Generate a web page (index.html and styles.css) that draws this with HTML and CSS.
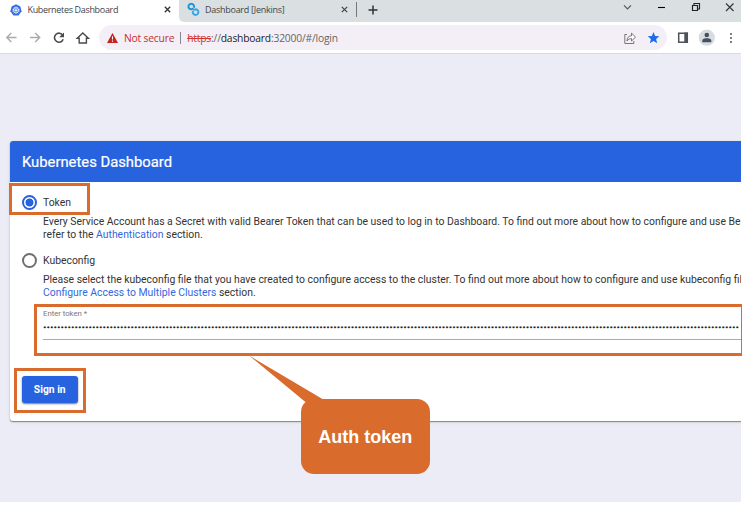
FILE: index.html
```html
<!DOCTYPE html>
<html lang="en">
<head>
<meta charset="utf-8">
<title>Kubernetes Dashboard</title>
<link rel="stylesheet" href="styles.css">
</head>
<body>
<div class="window">
  <div class="tabs">
    <div class="tab active">
      <svg class="fav" width="12" height="12" viewBox="0 0 12 12"><path d="M6 .3 10.4 2.4 11.6 7.2 8.5 11.5H3.5L.4 7.2 1.6 2.4Z" fill="#326ce5"/><circle cx="6" cy="6.2" r="2.7" fill="none" stroke="#fff" stroke-width=".7"/><path d="M6 1.9V10.1M2.1 5.2 9.9 7.2M2.1 7.2 9.9 5.2M3.9 9.4 8.1 3M8.1 9.4 3.9 3" stroke="#fff" stroke-width=".45"/></svg>
      <span class="title t1">Kubernetes Dashboard</span>
      <svg class="close" width="7" height="7" viewBox="0 0 7 7"><path d="M.8.8 6.2 6.2M6.2.8.8 6.2" stroke="#333" stroke-width="1.3"/></svg>
    </div>
    <div class="tab other">
      <svg class="fav" width="13" height="13" viewBox="0 0 13 13" fill="none" stroke-width="1.9"><path d="M6.9 4.6A2.8 2.8 0 1 0 4.2 6.4L6.6 5.4" stroke="#1791d8"/><path d="M6 8A2.8 2.8 0 1 0 8.8 6.3L6.2 7.2" stroke="#2fa6ea"/></svg>
      <span class="title t2">Dashboard [Jenkins]</span>
      <svg class="close" width="7" height="7" viewBox="0 0 7 7"><path d="M.8.8 6.2 6.2M6.2.8.8 6.2" stroke="#444" stroke-width="1.2"/></svg>
    </div>
    <i class="sep"></i>
    <svg class="plus" width="10" height="10" viewBox="0 0 10 10"><path d="M5 .5V9.5M.5 5H9.5" stroke="#333" stroke-width="1.5"/></svg>
    <svg class="controls" width="120" height="18" viewBox="622 0 120 18" fill="none" stroke="#222" stroke-width="1.1"><path d="M624 5.3 627.5 9 631 5.3" stroke="#555"/><path d="M658 7.5H665" stroke="#000"/><path d="M692.5 5.5H697.5V10.5H692.5Z" stroke-width="1.2"/><path d="M694 5V3.5H699.5V9H698"/><path d="M726 3.5 733.5 11M733.5 3.5 726 11" stroke="#333"/></svg>
  </div>
  <div class="toolbar">
    <svg class="nav" width="94" height="30" viewBox="0 0 94 30" fill="none" stroke-width="1.4"><path d="M16.5 14.5H7M11.3 10 6.8 14.5 11.3 19" stroke="#aaa"/><path d="M30 14.5H39.5M35.2 10 39.7 14.5 35.2 19" stroke="#aaa"/><path d="M62.8 12.3A4.5 4.5 0 1 0 63.2 16.2" stroke="#4a4a4a" stroke-width="1.6"/><path d="M64 9.5V14.2H59.2Z" fill="#4a4a4a"/><path d="M77.2 15.2H79.2V20H86.4V15.2H88.4L82.8 9.9Z" stroke="#4a4a4a" stroke-width="1.4"/></svg>
    <div class="omnibox">
      <svg class="warn" width="11" height="10" viewBox="0 0 11 10"><path d="M5.5 0 11 10H0Z" fill="#c5221f"/><path d="M5.5 3.3V6.6M5.5 7.5V8.8" stroke="#fff" stroke-width="1.1"/></svg>
      <span class="insecure">Not secure</span>
      <i class="bar"></i>
      <span class="url"><s>https</s><span>://</span><b>dashboard</b>:32000/#/login</span>
      <svg class="actions" width="40" height="16" viewBox="622 30 40 16"><path d="M627 34.5H624.8V43.5H633.8V41" fill="none" stroke="#777" stroke-width="1"/><path d="M627 41C627 37.5 629 35.8 631.5 35.8V33.2L635.5 37.1 631.5 41V38.6C629.5 38.5 628 39.4 627 41Z" fill="#fff" stroke="#666" stroke-width=".9"/><path d="M653.5 32 655.1 35.9 659.3 36.2 656.1 39 657.1 43.2 653.5 41 649.9 43.2 650.9 39 647.7 36.2 651.9 35.9Z" fill="#1a6fe8"/></svg>
    </div>
    <svg class="right" width="64" height="26" viewBox="674 25 64 26"><path d="M678.7 33.2H687.3V42.3H678.7Z" fill="#fff" stroke="#4d5158" stroke-width="1.5"/><path d="M684.3 32.5H688V43H684.3Z" fill="#4d5158"/><circle cx="706.8" cy="37.7" r="8.1" fill="#d5dce2"/><circle cx="706.8" cy="35" r="2.3" fill="#47505c"/><path d="M702.3 42.2V40.5C702.3 38.8 705 38.2 706.8 38.2S711.3 38.8 711.3 40.5V42.2Z" fill="#47505c"/><g fill="#555"><circle cx="731" cy="34" r="1"/><circle cx="731" cy="38" r="1"/><circle cx="731" cy="42" r="1"/></g></svg>
  </div>
  <main class="page">
    <section class="card">
      <h1>Kubernetes Dashboard</h1>
      <div class="body">
        <div class="option o1"><i class="radio on"></i><span>Token</span></div>
        <p class="desc d1"><span class="l1">Every Service Account has a Secret with valid Bearer Token that can be used to log in to Dashboard. To find out more about how to configure and use Be</span><br><span class="l2">refer to the <a>Authentication</a> section.</span></p>
        <div class="option o2"><i class="radio"></i><span>Kubeconfig</span></div>
        <p class="desc d2"><span class="l3">Please select the kubeconfig file that you have created to configure access to the cluster. To find out more about how to configure and use kubeconfig fil</span><br><span class="l4"><a>Configure Access to Multiple Clusters</a> section.</span></p>
        <div class="field"><label>Enter token *</label><div class="dots">•••••••••••••••••••••••••••••••••••••••••••••••••••••••••••••••••••••••••••••••••••••••••••••••••••••••••••••••••••••••••••••••••••••••••••••••••••••••••••••••••••••••••••••••••••••••••••••••••••••••</div></div>
        <button>Sign in</button>
      </div>
    </section>
    <div class="mark m1"></div>
    <div class="mark m2"></div>
    <div class="mark m3"></div>
    <svg class="tail" width="90" height="60" viewBox="240 350 90 60"><path d="M249 355.5 325 400.5 312 410 306 402.5Z" fill="#d96c2c"/></svg>
    <div class="callout">Auth token</div>
  </main>
</div>
</body>
</html>
```
FILE: styles.css
```css
*{box-sizing:border-box}
body{margin:0;background:#fff;overflow:hidden}
svg{display:block;flex:none}
.window{width:742px;height:502px;overflow:hidden;font-family:Roboto,sans-serif;white-space:nowrap;position:relative}
.tabs{width:741px;height:22px;background:linear-gradient(90deg,#fff 190px,#dadfe2 190px);display:flex;align-items:flex-start;font-family:"Open Sans",sans-serif;font-size:9px;color:#444}
.tab{display:flex;align-items:center;height:22px;padding-bottom:3px}
.tab.active{width:179px;background:#fff;padding-left:10px}
.tab.other{width:177px;padding-left:8px;background:#dadfe2;border-radius:0 0 0 5px}
.title{flex:1;line-height:19px}
.tab.active .title{margin-left:5.5px;letter-spacing:-.33px}
.tab.other .title{margin-left:5px;letter-spacing:-.27px}
.tab .close{margin-right:8px}
.sep{width:1px;height:15px;margin-top:2px;background:#777}
.plus{margin:5px 0 0 11px}
.controls{margin-left:auto;margin-right:-1px}
.toolbar{width:741px;height:32px;background:#fff;border-bottom:1px solid #d9d9de;display:flex;align-items:center}
.nav{margin-right:5px}
.omnibox{width:568px;height:25px;border-radius:13px;background:#f4eff6;display:flex;align-items:center;padding-left:8px;font-family:"Open Sans",sans-serif;font-size:10.3px;letter-spacing:-.2px;color:#666}
.insecure{color:#c5302d;margin-left:6px}
.bar{width:1px;height:12px;background:#888;margin:0 6px}
.url s{color:#d0342c}
.url b{font-weight:400;color:#222}
.actions{margin-left:auto;margin-right:5px}
.right{margin-left:7px}
.page{width:741px;height:448px;background:#ebecf5;padding:87px 0 0 10px;overflow:hidden}
.card{width:760px;height:280px;background:#fff;border-radius:3px;box-shadow:0 1px 1px #888,0 1px 3px #ccc}
h1{margin:0;height:41px;background:#2763df;color:#fff;border-radius:3px 3px 0 0;font-size:14.8px;font-weight:400;line-height:42px;padding-left:12px;-webkit-text-stroke:.2px #fff}
.body{padding:13px 0 0 12px;font-size:10.4px;color:#333}
.option{display:flex;align-items:center;height:15px;gap:6px}
.radio{width:15px;height:15px;border:2px solid #707070;border-radius:50%}
.radio.on{border-color:#2763df;background:radial-gradient(circle,#2763df 3.6px,#fff 4.4px)}
.desc{margin:5px 0 0 21px;line-height:13px}
.o2{margin-top:12px}
a{color:#3367e0}
.field{margin:9px 0 0 21px;height:32px;border-bottom:1px solid #aaa}
label{display:block;font-size:7.8px;letter-spacing:-.04px;line-height:12px;color:#777}
.dots{height:8px;margin-top:4px;overflow:hidden;color:#111;font:700 5.8333px/8px "Liberation Mono",monospace;-webkit-text-stroke:.4px #111}
button{display:block;margin:36px 0 0;width:55.5px;height:27px;border:0;border-radius:3px;background:#2763df;color:#fff;font:700 10.3px Roboto,sans-serif;padding:0;box-shadow:0 1px 2px #777}
.mark{position:absolute;border:3px solid #d96c2c}
.m1{left:9px;top:183px;width:81px;height:32px}
.m2{left:34px;top:304px;width:710px;height:52px}
.m3{left:14px;top:368px;width:72px;height:45px}
.tail{position:absolute;left:240px;top:350px}
.callout{position:absolute;left:301px;top:399px;width:128.5px;height:75px;border-radius:13px;background:#d96c2c;color:#fff;font:700 18px/76px "Liberation Sans",sans-serif;text-align:center}
```
